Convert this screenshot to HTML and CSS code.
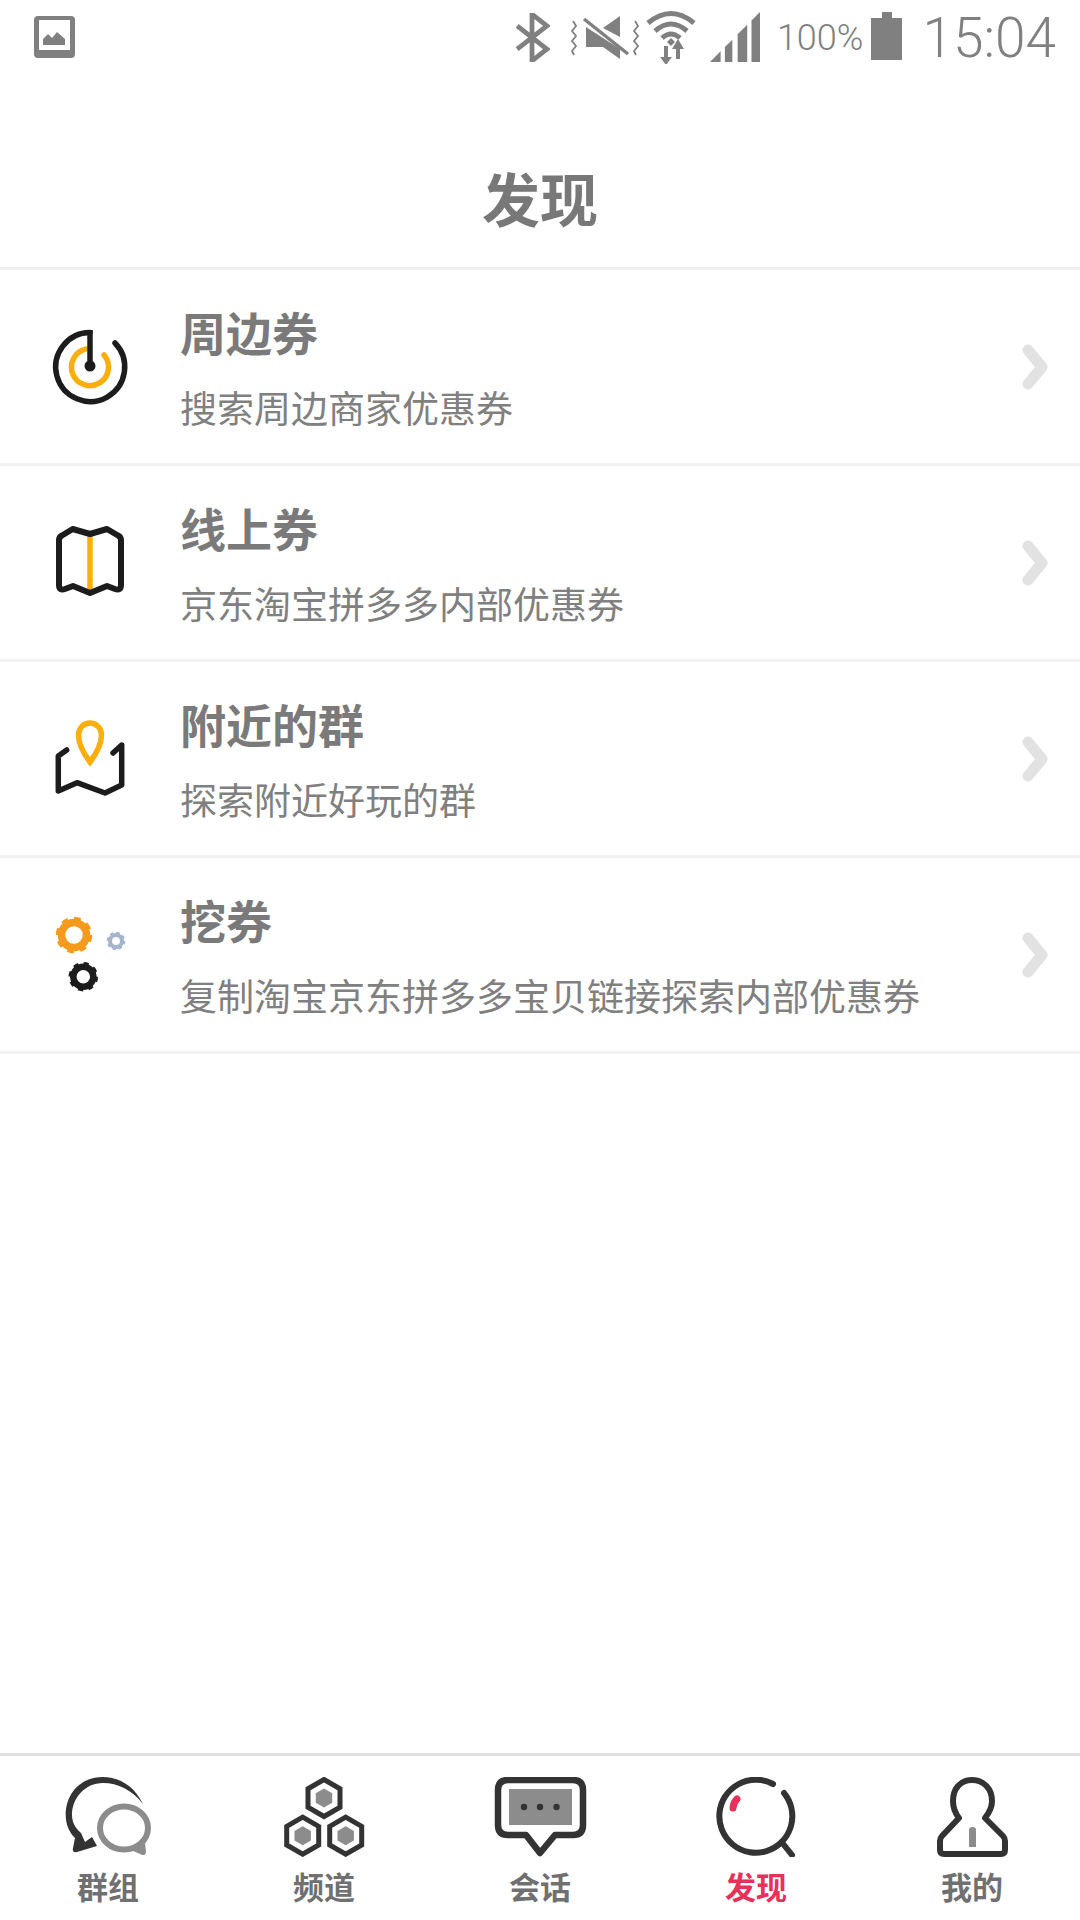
FILE: index.html
```html
<!DOCTYPE html>
<html lang="zh-CN">
<head>
  <meta charset="UTF-8">
  <title>发现</title>
  <link rel="stylesheet" href="styles.css">
</head>
<body>
  <div class="status-bar">
    <svg class="st-image" width="41" height="42" viewBox="0 0 41 42">
      <rect width="41" height="42" rx="4" fill="#808080"/>
      <rect x="5" y="4" width="31" height="30" fill="#fff"/>
      <path d="M9 29V23L14 18L18 22L23 16L31 23V29Z" fill="#808080"/>
    </svg>
    <div class="status-right">
      <svg class="st-bt" width="36" height="49" viewBox="0 0 34 46"><path d="M3 12L31 34L17 45V1L31 12L3 34" fill="none" stroke="#808080" stroke-width="4.5"/></svg>
      <svg class="st-mute" width="69" height="44" viewBox="0 0 69 44">
        <path d="M33 12L50 0V21Z M16 11V31H33L50 43V33Z" fill="#808080"/>
        <path d="M14 3L58 38" stroke="#808080" stroke-width="3.5"/>
        <path d="M3 5L6 10L2 15L6 20L2 25L6 30L2 35L4 39 M65 5L68 10L64 15L68 20L64 25L68 30L64 35L66 39" fill="none" stroke="#808080" stroke-width="1.8"/>
      </svg>
      <svg class="st-wifi" width="50" height="54" viewBox="0 0 50 54">
        <g fill="none" stroke="#808080" stroke-width="5">
          <path d="M2 13Q25 -6 48 13"/>
          <path d="M9 21Q25 7 41 21"/>
          <path d="M16 28Q25 20 34 28"/>
        </g>
        <path d="M25 28L29 32L25 36L21 32Z M18 36H22V47H26L20 55L14 47H18Z M30 38H34V49H30Z M32 29L38 39H26Z" fill="#808080"/>
      </svg>
      <svg class="st-signal" width="50" height="50" viewBox="0 0 47 47">
        <path d="M0 47L10 37V47Z M14 47V33L21 26V47Z M26 47V21L35 12V47Z M39 47V8L47 0V47Z" fill="#808080"/>
      </svg>
      <span class="st-pct">100%</span>
      <svg class="st-battery" width="31" height="48" viewBox="0 0 31 48"><path d="M11 0H21V6H31V48H0V6H11Z" fill="#808080"/></svg>
      <span class="st-time">15:04</span>
    </div>
  </div>

  <div class="header"><h1>发现</h1></div>

  <div class="list">
    <div class="row">
      <svg class="row-icon" width="100" height="100" viewBox="0 0 100 100">
        <path d="M46 32A18.5 18.5 0 1 0 64 38" fill="none" stroke="#fcae0b" stroke-width="5.5" stroke-linecap="round"/>
        <path d="M50 15.5A34.5 34.5 0 1 0 75 26" fill="none" stroke="#1c1c1c" stroke-width="5.5" stroke-linecap="round"/>
        <path d="M50 13V50" stroke="#1c1c1c" stroke-width="5.5"/>
        <circle cx="50" cy="49" r="5.5" fill="#1c1c1c"/>
      </svg>
      <div class="row-text">
        <div class="row-title">周边券</div>
        <div class="row-sub">搜索周边商家优惠券</div>
      </div>
      <svg class="chevron" width="26" height="46" viewBox="0 0 26 46"><path d="M6 6L20 23L6 40" fill="none" stroke="#e2e2e2" stroke-width="11" stroke-linecap="round" stroke-linejoin="round"/></svg>
    </div>
    <div class="row">
      <svg class="row-icon" width="100" height="100" viewBox="0 0 100 100">
        <path d="M50 20V80" stroke="#fcae0b" stroke-width="5.5"/>
        <path d="M19 27Q19 24 22 22.5L32.7 16L50 21L67 16L78 22.5Q81 24 81 27V72Q81 78 75 76L67 73L50 80L33 73L25 76Q19 78 19 72Z" fill="none" stroke="#1c1c1c" stroke-width="6" stroke-linejoin="round"/>
      </svg>
      <div class="row-text">
        <div class="row-title">线上券</div>
        <div class="row-sub">京东淘宝拼多多内部优惠券</div>
      </div>
      <svg class="chevron" width="26" height="46" viewBox="0 0 26 46"><path d="M6 6L20 23L6 40" fill="none" stroke="#e2e2e2" stroke-width="11" stroke-linecap="round" stroke-linejoin="round"/></svg>
    </div>
    <div class="row">
      <svg class="row-icon" width="100" height="100" viewBox="0 0 100 100">
        <path d="M50 53C44 45 38.5 36 38.5 26C38.5 19 44 14 50 14C56 14 61.5 19 61.5 26C61.5 36 56 45 50 53Z" fill="none" stroke="#fcae0b" stroke-width="5.5"/>
        <path d="M26.7 41L18.3 47V82L37 73.7L65 84L81.7 76V36L73 44" fill="none" stroke="#1c1c1c" stroke-width="5.5" stroke-linecap="round" stroke-linejoin="round"/>
      </svg>
      <div class="row-text">
        <div class="row-title">附近的群</div>
        <div class="row-sub">探索附近好玩的群</div>
      </div>
      <svg class="chevron" width="26" height="46" viewBox="0 0 26 46"><path d="M6 6L20 23L6 40" fill="none" stroke="#e2e2e2" stroke-width="11" stroke-linecap="round" stroke-linejoin="round"/></svg>
    </div>
    <div class="row">
      <svg class="row-icon" width="100" height="100" viewBox="0 0 100 100">
        <circle cx="34" cy="30" r="12.5" fill="none" stroke="#f59a1c" stroke-width="7.5"/>
        <circle cx="34" cy="30" r="16" fill="none" stroke="#f59a1c" stroke-width="4.5" stroke-dasharray="6.5 6"/>
        <circle cx="43.3" cy="71.7" r="10" fill="none" stroke="#1c1c1c" stroke-width="6.5"/>
        <circle cx="43.3" cy="71.7" r="13" fill="none" stroke="#1c1c1c" stroke-width="3.5" stroke-dasharray="5 5.2"/>
        <circle cx="76" cy="36" r="6" fill="none" stroke="#a5b5cc" stroke-width="4"/>
        <circle cx="76" cy="36" r="8" fill="none" stroke="#a5b5cc" stroke-width="2.5" stroke-dasharray="3.3 3"/>
      </svg>
      <div class="row-text">
        <div class="row-title">挖券</div>
        <div class="row-sub">复制淘宝京东拼多多宝贝链接探索内部优惠券</div>
      </div>
      <svg class="chevron" width="26" height="46" viewBox="0 0 26 46"><path d="M6 6L20 23L6 40" fill="none" stroke="#e2e2e2" stroke-width="11" stroke-linecap="round" stroke-linejoin="round"/></svg>
    </div>
  </div>

  <div class="tabbar">
    <div class="tab">
      <svg width="100" height="80" viewBox="0 0 100 80">
        <path d="M85 27C76 8 60 0 45 0C22 0 7.7 17 7.7 38C7.7 47 11 55 17 61L15 71Q14 76 19 75L39 69L34 60L27 65L23 56C17 51 14 45 14 38C14 21 27 6 45 6C60 6 74 13 85 27Z" fill="#333"/>
        <ellipse cx="66" cy="51" rx="24" ry="21.5" fill="#fff" stroke="#8c8c8c" stroke-width="6"/>
        <path d="M76 71L85 75L84 66" fill="none" stroke="#8c8c8c" stroke-width="6" stroke-linecap="round" stroke-linejoin="round"/>
      </svg>
      <span>群组</span>
    </div>
    <div class="tab">
      <svg width="100" height="80" viewBox="0 0 100 80">
        <g transform="translate(50 21)">
          <polygon points="0,-18.5 16,-9.25 16,9.25 0,18.5 -16,9.25 -16,-9.25" fill="none" stroke="#333" stroke-width="5"/>
          <polygon points="0,-9.5 8.2,-4.75 8.2,4.75 0,9.5 -8.2,4.75 -8.2,-4.75" fill="#8c8c8c"/>
        </g>
        <g transform="translate(28.7 58.7)">
          <polygon points="0,-18.5 16,-9.25 16,9.25 0,18.5 -16,9.25 -16,-9.25" fill="none" stroke="#333" stroke-width="5"/>
          <polygon points="0,-9.5 8.2,-4.75 8.2,4.75 0,9.5 -8.2,4.75 -8.2,-4.75" fill="#8c8c8c"/>
        </g>
        <g transform="translate(71.7 58.7)">
          <polygon points="0,-18.5 16,-9.25 16,9.25 0,18.5 -16,9.25 -16,-9.25" fill="none" stroke="#333" stroke-width="5"/>
          <polygon points="0,-9.5 8.2,-4.75 8.2,4.75 0,9.5 -8.2,4.75 -8.2,-4.75" fill="#8c8c8c"/>
        </g>
      </svg>
      <span>频道</span>
    </div>
    <div class="tab">
      <svg width="100" height="80" viewBox="0 0 100 80">
        <path d="M18 3H83Q93 3 93 13V48Q93 58 83 58H65L50 76L36 58H18Q8 58 8 48V13Q8 3 18 3Z" fill="none" stroke="#333" stroke-width="6.5" stroke-linejoin="round"/>
        <rect x="19" y="12" width="63" height="36" fill="#8c8c8c"/>
        <circle cx="34" cy="30" r="3.2" fill="#333"/>
        <circle cx="50" cy="30" r="3.2" fill="#333"/>
        <circle cx="66.5" cy="30" r="3.2" fill="#333"/>
      </svg>
      <span>会话</span>
    </div>
    <div class="tab active">
      <svg width="100" height="80" viewBox="0 0 100 80">
        <path d="M78 16A36.5 36.5 0 1 1 67 7" fill="none" stroke="#333" stroke-width="6" stroke-linecap="round"/>
        <path d="M78 68L86 78" stroke="#333" stroke-width="6" stroke-linecap="round"/>
        <path d="M31 22Q27.5 25 27 31" fill="none" stroke="#e8305a" stroke-width="7" stroke-linecap="round"/>
      </svg>
      <span>发现</span>
    </div>
    <div class="tab">
      <svg width="100" height="80" viewBox="0 0 100 80">
        <path d="M50 3C38 3 31 12 31 24C31 30 33 36 37 41L20 59Q18 61 18 64V73Q18 77 22 77H79Q83 77 83 73V64Q83 61 81 59L63 41C67 36 70 30 70 24C70 12 62 3 50 3Z" fill="none" stroke="#333" stroke-width="6" stroke-linejoin="round"/>
        <path d="M47 70V53Q47 50 50.5 50Q54 50 54 53V70Z" fill="#8c8c8c"/>
      </svg>
      <span>我的</span>
    </div>
  </div>
</body>
</html>
```

FILE: styles.css
```css
* { box-sizing: border-box; }
body { margin: 0; width: 1080px; height: 1920px; background: #fff; display: flex; flex-direction: column; font-family: "Noto Sans CJK SC", "Noto Sans", sans-serif; overflow: hidden; }

.status-bar { height: 76px; padding: 0 24px 0 34px; display: flex; align-items: center; flex-shrink: 0; }
.st-image { margin-bottom: 3px; }
.status-right { margin-left: auto; display: flex; align-items: center; color: #808080; font-family: Roboto, sans-serif; font-weight: 300; }
.st-bt { margin-right: 20px; margin-bottom: 2px; }
.st-mute { margin-right: 7px; }
.st-wifi { margin-right: 14px; margin-bottom: 3px; }
.st-signal { margin-right: 17px; margin-bottom: 3px; }
.st-pct { font-size: 36px; margin-right: 8px; }
.st-battery { margin-right: 20px; margin-bottom: 4px; }
.st-time { font-size: 55px; }

.header { height: 194px; padding-top: 81px; border-bottom: 3px solid #f0f0f0; flex-shrink: 0; }
.header h1 { margin: 0; text-align: center; font-size: 58px; line-height: 80px; font-weight: 700; color: #787878; }

.list { flex: 1; }
.row { height: 196px; padding: 0 32px 0 40px; display: flex; align-items: center; border-bottom: 3px solid #f2f2f2; }
.row-icon { flex-shrink: 0; margin-right: 40px; }
.row-text { flex: 1; }
.row-title { font-size: 46px; line-height: 60px; font-weight: 700; color: #7a7a7a; }
.row-sub { margin-top: 21px; font-size: 37px; line-height: 50px; color: #808080; }
.chevron { flex-shrink: 0; }

.tabbar { height: 167px; padding-top: 21px; border-top: 3px solid #e0e0e0; display: flex; flex-shrink: 0; }
.tab { flex: 1; display: flex; flex-direction: column; align-items: center; font-size: 31px; line-height: 40px; font-weight: 700; color: #707070; }
.tab span { margin-top: 9px; }
.tab.active { color: #e8305a; }
```
